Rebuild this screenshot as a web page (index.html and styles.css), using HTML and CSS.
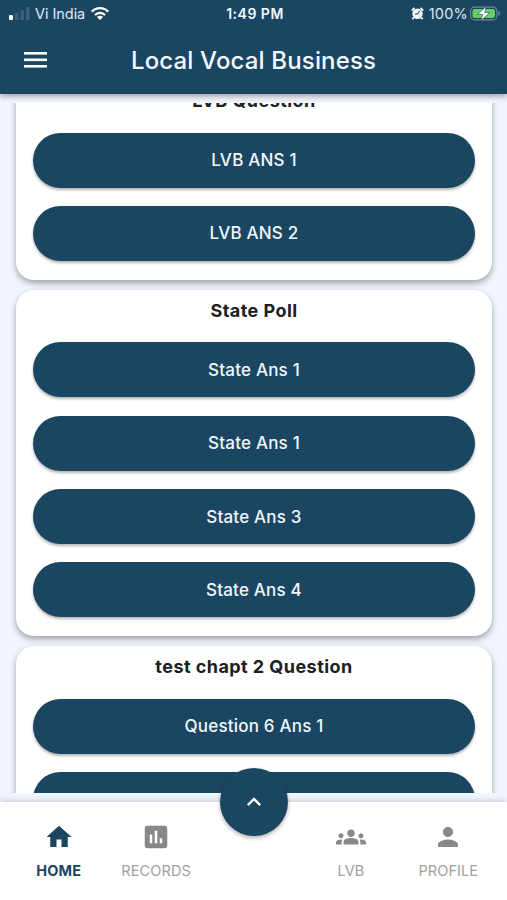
FILE: index.html
```html
<!DOCTYPE html>
<html lang="en">
<head>
<meta charset="utf-8">
<title>Local Vocal Business</title>
<link rel="stylesheet" href="styles.css">
</head>
<body>
<div class="app">
  <header class="top">
    <div class="status">
      <div class="status-left">
        <svg class="signal" width="22" height="14" viewBox="0 0 22 14"><rect x="0" y="8" width="4" height="5" rx="1" fill="#fff"/><g fill="#3b617c"><rect x="6" y="5.500" width="3.500" height="7.500" rx="1"/><rect x="11.500" y="3" width="3.500" height="10" rx="1"/><rect x="17" y="0" width="3.500" height="13" rx="1"/></g></svg>
        <span class="carrier">Vi India</span>
        <svg class="wifi" width="18" height="14" viewBox="0 0 18 14"><g fill="none" stroke="#fff" stroke-width="2.300"><path d="M.8 4.700C5.400 0 12.600 0 17.200 4.700"/><path d="M3.900 8C6.800 5.100 11.200 5.100 14.100 8"/></g><path d="M5.900 9.900C7.700 8.300 10.300 8.300 12.100 9.900L9 13Z" fill="#fff"/></svg>
      </div>
      <span class="clock">1:49 PM</span>
      <div class="status-right">
        <svg width="13" height="13" viewBox="0 0 13 13"><circle cx="6.500" cy="6.700" r="5.200" fill="#f4f8fb"/><path d="M.9 3.600 3.400.9M12.100 3.600 9.600.9M2.700 10.500 1.500 12.300M10.300 10.500 11.500 12.300" stroke="#f4f8fb" stroke-width="1.900"/><path d="M8.600 4 6.500 7H4" fill="none" stroke="#1b4662" stroke-width="1.100"/></svg>
        <span class="percent">100%</span>
        <svg width="31" height="16" viewBox="0 0 31 16"><rect x=".6" y="1.100" width="26.300" height="12.800" rx="4" fill="none" stroke="#6f8b9e" stroke-width="1.100"/><rect x="2.500" y="2.900" width="22.500" height="9.200" rx="2.300" fill="#63d05f"/><path d="M28.300 5.100C30.400 5.900 30.400 9.100 28.300 9.900Z" fill="#6f8b9e"/><path d="M16.200.5 7.600 8.400H12.600L10.900 14.700 19.800 6.500H14.700Z" fill="#fff" stroke="#1b4662" stroke-width=".6"/></svg>
      </div>
    </div>
    <div class="bar">
      <svg class="menu" width="23" height="16" viewBox="0 0 23 16" fill="#fff"><rect y="0" width="23" height="2.600"/><rect y="6.500" width="23" height="2.600"/><rect y="13" width="23" height="2.600"/></svg>
      <h1>Local Vocal Business</h1>
    </div>
  </header>

  <main class="feed">
    <section class="card card-first">
      <h2>LVB Question</h2>
      <button>LVB ANS 1</button>
      <button>LVB ANS 2</button>
    </section>
    <section class="card">
      <h2>State Poll</h2>
      <button>State Ans 1</button>
      <button>State Ans 1</button>
      <button>State Ans 3</button>
      <button>State Ans 4</button>
    </section>
    <section class="card">
      <h2>test chapt 2 Question</h2>
      <button>Question 6 Ans 1</button>
      <button></button>
    </section>
  </main>

  <nav class="tabs">
    <a class="tab active"><svg viewBox="0 0 24 24"><path d="M10 20v-6h4v6h5v-8h3L12 3 2 12h3v8z"/></svg><span>HOME</span></a>
    <a class="tab"><svg viewBox="0 0 24 24"><path d="M19 3H5c-1.100 0-2 .9-2 2v14c0 1.100.9 2 2 2h14c1.100 0 2-.9 2-2V5c0-1.100-.9-2-2-2zM9 17H7v-7h2v7zm4 0h-2V7h2v10zm4 0h-2v-4h2v4z"/></svg><span>RECORDS</span></a>
    <i class="gap"></i>
    <a class="tab"><svg viewBox="0 0 24 24"><path d="M12 12.750c1.630 0 3.070.39 4.240.9 1.080.48 1.760 1.560 1.760 2.730V18H6v-1.610c0-1.180.68-2.260 1.760-2.730 1.170-.52 2.610-.91 4.240-.91zM4 13c1.100 0 2-.9 2-2s-.9-2-2-2-2 .9-2 2 .9 2 2 2zm1.130 1.100C4.760 14.040 4.390 14 4 14c-.99 0-1.930.21-2.780.58C.48 14.900 0 15.620 0 16.430V18h4.500v-1.610c0-.83.23-1.610.63-2.290zM20 13c1.100 0 2-.9 2-2s-.9-2-2-2-2 .9-2 2 .9 2 2 2zm4 3.430c0-.81-.48-1.530-1.220-1.850C21.930 14.210 20.990 14 20 14c-.39 0-.76.04-1.130.1.400.68.63 1.460.63 2.290V18H24v-1.570zM12 6c1.660 0 3 1.340 3 3s-1.340 3-3 3-3-1.340-3-3 1.340-3 3-3z"/></svg><span>LVB</span></a>
    <a class="tab"><svg viewBox="0 0 24 24"><path d="M12 12c2.210 0 4-1.790 4-4s-1.790-4-4-4-4 1.790-4 4 1.790 4 4 4zm0 2c-2.670 0-8 1.340-8 4v2h16v-2c0-2.660-5.330-4-8-4z"/></svg><span>PROFILE</span></a>
    <div class="fab"><svg width="16" height="10" viewBox="0 0 16 10"><path d="M1.800 8.200 8 2 14.200 8.200" fill="none" stroke="#fff" stroke-width="2.400"/></svg></div>
  </nav>
</div>
</body>
</html>
```

FILE: styles.css
```css
* { box-sizing: border-box; }
body { margin: 0; background: #f1f5fd; font-family: Inter, sans-serif; }
.app { height: 900px; display: flex; flex-direction: column; overflow: hidden; }
.top { height: 94px; flex: none; background: #1b4662; color: #f5f9fd; box-shadow: 0 2px 6px rgba(0,0,0,.38); }
.status { height: 27px; padding: 0 6px 0 9px; display: grid; grid-template-columns: 1fr auto 1fr; align-items: center; font-size: 14.500px; }
.status-left, .status-right { display: flex; align-items: center; }
.status-right { justify-content: flex-end; }
.carrier { margin: 0 6px 0 4px; letter-spacing: -.05px; color: #dfe8ef; }
.clock { font-weight: 600; font-size: 14px; letter-spacing: .5px; }
.percent { margin: 0 2px 0 5px; letter-spacing: .2px; color: #dfe8ef; }
.bar { height: 66px; display: grid; grid-template-columns: 24px 1fr 24px; align-items: center; padding: 0 24px; }
h1 { margin: 0; font-size: 24px; font-weight: 500; letter-spacing: .15px; text-align: center; white-space: nowrap; }
.feed { height: 690px; flex: none; margin-top: 9px; overflow: hidden; padding: 0 15px 0 16px; }
.card { display: flex; flex-direction: column; gap: 18.300px; margin-bottom: 10px; padding: 10px 17px 19px; border-radius: 18px; background: #fff; box-shadow: 0 3px 6px rgba(0,0,0,.35); }
.card-first { margin-top: -23px; }
h2 { margin: 0 0 6px; height: 18.300px; line-height: 21px; font-size: 18px; font-weight: 650; letter-spacing: .45px; text-align: center; color: #202020; }
button { height: 55px; padding: 0; border: 0; border-radius: 28px; background: #1b4662; color: #f1f7fc; font: 500 17px Inter, sans-serif; letter-spacing: .2px; box-shadow: 0 2px 3px rgba(0,0,0,.3); }
.tabs { position: relative; flex: none; height: 98px; margin-top: 9px; padding: 0 10px; display: grid; grid-template-columns: repeat(5, 1fr); background: #fff; box-shadow: 0 -1px 6px rgba(0,0,0,.18); }
.tab { display: flex; flex-direction: column; align-items: center; padding-top: 20px; gap: 10px; color: #a0a0a0; font-size: 14.500px; line-height: 18px; letter-spacing: .1px; }
.tab svg { width: 30px; height: 30px; fill: #888; }
.tab.active { color: #1b4662; font-weight: 700; }
.tab.active svg { fill: #1b4662; }
.fab { position: absolute; left: 220px; top: -34px; width: 68px; height: 68px; border-radius: 50%; background: #1b4662; display: flex; align-items: center; justify-content: center; box-shadow: 0 2px 4px rgba(0,0,0,.3); }
```
